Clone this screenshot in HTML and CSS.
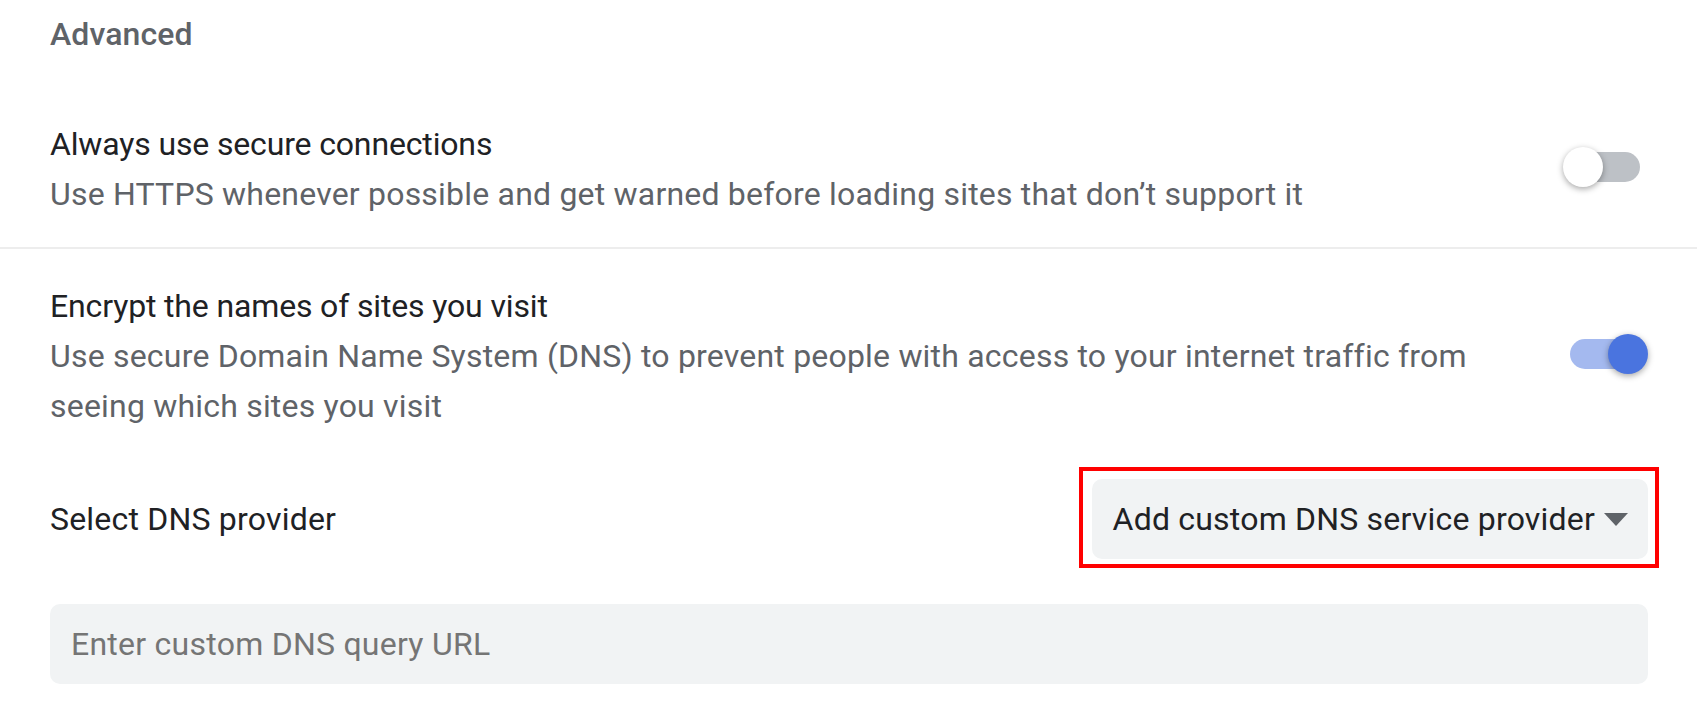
FILE: index.html
```html
<!DOCTYPE html>
<html lang="en">
  <head>
    <meta charset="UTF-8" />
    <meta name="viewport" content="width=device-width, initial-scale=1.0" />
    <title>Security - Advanced</title>
    <link rel="stylesheet" href="styles.css">
  </head>
  <body>
    <div class="page">
      <h2 class="section-title">Advanced</h2>

      <div class="row">
        <div class="row-text">
          <div class="row-label">Always use secure connections</div>
          <div class="row-sub">Use HTTPS whenever possible and get warned before loading sites that don’t support it</div>
        </div>
        <div class="toggle">
          <span class="toggle-bar"></span>
          <span class="toggle-knob"></span>
        </div>
      </div>

      <div class="row divided">
        <div class="row-text">
          <div class="row-label">Encrypt the names of sites you visit</div>
          <div class="row-sub">Use secure Domain Name System (DNS) to prevent people with access to your internet traffic from seeing which sites you visit</div>
        </div>
        <div class="toggle checked">
          <span class="toggle-bar"></span>
          <span class="toggle-knob"></span>
        </div>
      </div>

      <div class="dns-row">
        <div class="dns-label">Select DNS provider</div>
        <div class="dropdown highlighted">
          <span>Add custom DNS service provider</span>
          <svg class="dropdown-arrow" width="24" height="13" viewBox="0 0 24 13">
            <path d="M0 0h24L12 13z" />
          </svg>
        </div>
      </div>

      <div class="dns-custom">
        <input class="dns-input" type="text" placeholder="Enter custom DNS query URL" />
      </div>
    </div>
  </body>
</html>
```

FILE: styles.css
```css
:root {
  --text-primary: #202124;
  --text-secondary: #5f6368;
  --field-bg: #f1f3f4;
  --separator: #ededed;
  --toggle-on: #4a74df;
  --toggle-off: #bdc1c6;
}

* {
  box-sizing: border-box;
}

body {
  margin: 0;
  background: #fff;
  font-family: Roboto, "Liberation Sans", sans-serif;
  font-size: 32px;
  letter-spacing: 0.2px;
  color: var(--text-primary);
  overflow: hidden;
}

.section-title {
  margin: 9px 0 0;
  padding: 0 49px 0 50px;
  font-size: 32px;
  font-weight: 500;
  line-height: 50px;
  letter-spacing: 0.1px;
  color: var(--text-secondary);
}

.row {
  display: flex;
  align-items: center;
  margin-top: 28px;
  padding: 32px 49px 28px 50px;
}

.row.divided {
  margin-top: 0;
  border-top: 2px solid var(--separator);
}

.row-text {
  flex: 1;
  padding-right: 50px;
}

.row-label {
  line-height: 50px;
  letter-spacing: -0.15px;
}

.row-sub {
  line-height: 50px;
  color: var(--text-secondary);
}

/* toggle switch */
.toggle {
  position: relative;
  flex: none;
  width: 85px;
  height: 40px;
  margin-bottom: 4px;
}

.toggle-bar {
  position: absolute;
  top: 5px;
  left: 7px;
  width: 70px;
  height: 30px;
  border-radius: 15px;
  background: var(--toggle-off);
}

.toggle-knob {
  position: absolute;
  top: 0;
  left: 0;
  width: 40px;
  height: 40px;
  border-radius: 50%;
  background: #fff;
  box-shadow: 0 2px 6px rgba(0, 0, 0, 0.35);
}

.toggle.checked .toggle-bar {
  background: var(--toggle-on);
  opacity: 0.5;
}

.toggle.checked .toggle-knob {
  left: 45px;
  background: var(--toggle-on);
}

/* dns provider */
.dns-row {
  display: flex;
  align-items: center;
  justify-content: space-between;
  min-height: 120px;
  padding: 0 49px 0 50px;
}

.dropdown {
  display: inline-flex;
  align-items: center;
  gap: 9px;
  height: 80px;
  padding: 0 20px 0 21px;
  border-radius: 10px;
  background: var(--field-bg);
  color: var(--text-primary);
}

.dropdown-arrow {
  fill: var(--text-secondary);
}

/* red marker box drawn around the dropdown */
.highlighted {
  position: relative;
}

.highlighted::after {
  content: "";
  position: absolute;
  top: -12px;
  right: -11px;
  bottom: -9px;
  left: -13px;
  border: 4px solid #ff0000;
  pointer-events: none;
}

.dns-custom {
  padding: 25px 49px 0 50px;
}

.dns-input {
  display: block;
  width: 100%;
  height: 80px;
  padding: 0 21px;
  border: none;
  border-radius: 10px;
  background: var(--field-bg);
  font-family: inherit;
  font-size: 32px;
  letter-spacing: 0.25px;
  color: var(--text-primary);
  outline: none;
}

.dns-input::placeholder {
  color: #757575;
}
```
